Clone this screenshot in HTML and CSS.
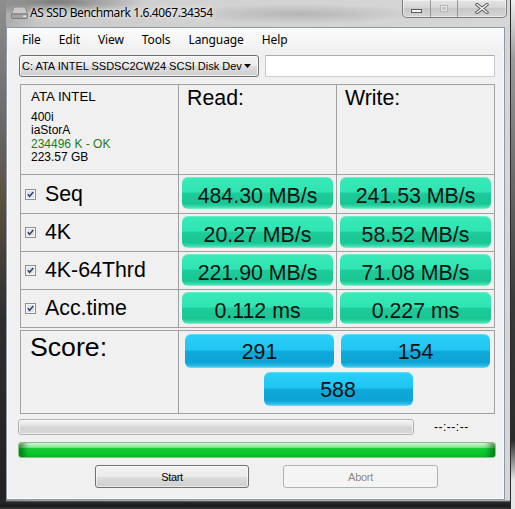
FILE: index.html
```html
<!DOCTYPE html>
<html>
<head>
<meta charset="utf-8">
<title>AS SSD Benchmark</title>
<link rel="stylesheet" href="styles.css">
</head>
<body>
<div class="window">
  <div class="titlebar">
    <svg class="app-icon" width="17" height="13" viewBox="0 0 17 13">
      <path d="M3 1 H14 L16.5 8 H0.5 Z" fill="#c9c9c9" stroke="#8c8c8c" stroke-width="1"/>
      <rect x="0.5" y="8" width="16" height="4.5" rx="1" fill="#a4a4a4" stroke="#7a7a7a" stroke-width="1"/>
      <rect x="12" y="9.5" width="3" height="1.5" fill="#e8e8e8"/>
    </svg>
    <span class="title">AS SSD Benchmark 1.6.4067.34354</span>
    <div class="caption">
      <span class="cb cb-min"><i class="min-glyph"></i></span>
      <span class="cb cb-max"><i class="max-glyph"></i></span>
      <span class="cb cb-close">
        <svg width="14" height="11" viewBox="0 0 14 11">
          <path d="M2 1.5 L12 9.5 M12 1.5 L2 9.5" stroke="#5a5a5a" stroke-width="3.4" stroke-linecap="round"/>
          <path d="M2 1.5 L12 9.5 M12 1.5 L2 9.5" stroke="#f4f4f4" stroke-width="1.6" stroke-linecap="round"/>
        </svg>
      </span>
    </div>
  </div>

  <div class="client">
    <nav class="menubar">
      <span>File</span><span>Edit</span><span>View</span><span>Tools</span><span>Language</span><span>Help</span>
    </nav>

    <div class="drive-row">
      <div class="select">
        <span class="select-text">C: ATA INTEL SSDSC2CW24 SCSI Disk Dev</span>
        <svg class="select-arrow" width="7" height="4" viewBox="0 0 7 4"><path d="M0 0 H7 L3.5 4 Z" fill="#000"/></svg>
      </div>
      <div class="textbox"></div>
    </div>

    <div class="results">
      <div class="cell info">
        <div class="info-title">ATA INTEL</div>
        <div class="info-line">400i</div>
        <div class="info-line">iaStorA</div>
        <div class="info-line ok">234496 K - OK</div>
        <div class="info-line">223.57 GB</div>
      </div>
      <div class="cell head">Read:</div>
      <div class="cell head">Write:</div>

      <div class="cell label">
        <svg class="chk" width="11" height="11" viewBox="0 0 11 11"><rect x="0.5" y="0.5" width="10" height="10" fill="#f6f6f6" stroke="#8e8f8f"/><rect x="2" y="2" width="7" height="7" fill="#dfe3e8"/><path d="M2.8 5.3 L4.6 7.3 L8.3 3" fill="none" stroke="#2e4270" stroke-width="1.5"/></svg>
        <span>Seq</span>
      </div>
      <div class="cell vcell"><div class="val green">484.30 MB/s</div></div>
      <div class="cell vcell"><div class="val green">241.53 MB/s</div></div>

      <div class="cell label">
        <svg class="chk" width="11" height="11" viewBox="0 0 11 11"><rect x="0.5" y="0.5" width="10" height="10" fill="#f6f6f6" stroke="#8e8f8f"/><rect x="2" y="2" width="7" height="7" fill="#dfe3e8"/><path d="M2.8 5.3 L4.6 7.3 L8.3 3" fill="none" stroke="#2e4270" stroke-width="1.5"/></svg>
        <span>4K</span>
      </div>
      <div class="cell vcell"><div class="val green">20.27 MB/s</div></div>
      <div class="cell vcell"><div class="val green">58.52 MB/s</div></div>

      <div class="cell label">
        <svg class="chk" width="11" height="11" viewBox="0 0 11 11"><rect x="0.5" y="0.5" width="10" height="10" fill="#f6f6f6" stroke="#8e8f8f"/><rect x="2" y="2" width="7" height="7" fill="#dfe3e8"/><path d="M2.8 5.3 L4.6 7.3 L8.3 3" fill="none" stroke="#2e4270" stroke-width="1.5"/></svg>
        <span>4K-64Thrd</span>
      </div>
      <div class="cell vcell"><div class="val green">221.90 MB/s</div></div>
      <div class="cell vcell"><div class="val green">71.08 MB/s</div></div>

      <div class="cell label">
        <svg class="chk" width="11" height="11" viewBox="0 0 11 11"><rect x="0.5" y="0.5" width="10" height="10" fill="#f6f6f6" stroke="#8e8f8f"/><rect x="2" y="2" width="7" height="7" fill="#dfe3e8"/><path d="M2.8 5.3 L4.6 7.3 L8.3 3" fill="none" stroke="#2e4270" stroke-width="1.5"/></svg>
        <span>Acc.time</span>
      </div>
      <div class="cell vcell"><div class="val green">0.112 ms</div></div>
      <div class="cell vcell"><div class="val green">0.227 ms</div></div>
    </div>

    <div class="score">
      <div class="cell score-label">Score:</div>
      <div class="cell score-vals">
        <div class="score-pair">
          <div class="val blue">291</div>
          <div class="val blue">154</div>
        </div>
        <div class="val blue total">588</div>
      </div>
    </div>

    <div class="progress-row">
      <div class="progress"></div>
      <span class="time">--:--:--</span>
    </div>

    <div class="greenbar"></div>

    <div class="buttons">
      <button class="btn">Start</button>
      <button class="btn" disabled>Abort</button>
    </div>
  </div>
</div>
</body>
</html>
```

FILE: styles.css
```css
* { box-sizing: border-box; }

html, body {
  margin: 0;
  padding: 0;
}

body {
  width: 515px;
  height: 509px;
  overflow: hidden;
  background: linear-gradient(to bottom, #f0f0f0 0, #9a9a9a 60px, #3a3a3a 300px, #2a2a2a 440px, #e6e6e6 480px);
  font-family: "Liberation Sans", Arial, sans-serif;
  color: #000;
}

.window {
  width: 511px;
  height: 509px;
  display: flex;
  flex-direction: column;
  border-right: 1px solid #2a2a2a;
  background:
    linear-gradient(to bottom, rgba(0,0,0,0) 0, rgba(0,0,0,0) 500px, #2c2c2c 502px, #1a1a1a 506px, #3a3a3a 509px),
    linear-gradient(to bottom, #8e8e8e 0, #6a6a6a 120px, #5a5040 200px, #2e2e2e 320px, #222 509px) left top / 6px 100% no-repeat,
    radial-gradient(ellipse 90px 14px at 55px 2px, rgba(70,70,70,0.6), rgba(70,70,70,0) 100%),
    radial-gradient(ellipse 120px 10px at 300px 14px, rgba(150,150,150,0.5), rgba(150,150,150,0) 100%),
    linear-gradient(to right, #a8a8a8 0, #c8c8c8 40px, #d2d2d2 200px, #d6d6d6 100%);
}

/* Title bar */
.titlebar {
  height: 27px;
  display: flex;
  align-items: flex-start;
  flex-shrink: 0;
}

.app-icon {
  margin: 6px 0 0 11px;
}

.title {
  margin: 5px 0 0 2px;
  font-family: "Noto Sans", "Open Sans", sans-serif;
  font-size: 12px;
  line-height: 16px;
  letter-spacing: -0.4px;
  color: #000;
  text-shadow: 0 0 6px #f2f2f2, 0 0 3px #f2f2f2;
}

.caption {
  margin-left: auto;
  margin-right: 3px;
  display: flex;
  height: 18px;
  border: 1px solid #7c7c7c;
  border-top: none;
  border-radius: 0 0 5px 5px;
  overflow: hidden;
  background: linear-gradient(to bottom, #e4e4e4 0, #d6d6d6 45%, #c8c8c8 50%, #d4d4d4 100%);
  box-shadow: inset 0 0 0 1px rgba(255,255,255,0.5);
}

.cb {
  display: flex;
  align-items: center;
  justify-content: center;
  height: 100%;
}

.cb-min { width: 28px; border-right: 1px solid #9a9a9a; }
.cb-max { width: 27px; border-right: 1px solid #9a9a9a; }
.cb-close { width: 48px; }

.min-glyph {
  display: block;
  width: 11px;
  height: 4px;
  margin-top: 5px;
  background: #f6f6f6;
  border: 1px solid #5c5c5c;
}

.max-glyph {
  display: block;
  width: 8px;
  height: 7px;
  border: 1px solid #b6b6b6;
  box-shadow: inset 0 0 0 1px #e6e6e6, inset 0 0 0 2px #c4c4c4;
}

/* Client area */
.client {
  margin-left: 6px;
  width: 499px;
  height: 473px;
  flex-shrink: 0;
  background: #f0f0f0;
  border: 1px solid #8d99a6;
  box-shadow: inset 0 0 0 1px #fbfbfb;
  display: flex;
  flex-direction: column;
}

.menubar {
  height: 22px;
  display: flex;
  align-items: center;
  padding-left: 6px;
  background: linear-gradient(to bottom, #fbfbfb, #f1f1f1);
  font-family: "Noto Sans", "Open Sans", sans-serif;
  font-size: 12px;
  letter-spacing: -0.1px;
  flex-shrink: 0;
}

.menubar span {
  padding: 0 9px;
}

.drive-row {
  margin-top: 5px;
  height: 22px;
  display: flex;
  gap: 6px;
  padding-left: 12px;
  flex-shrink: 0;
}

.select {
  width: 240px;
  height: 22px;
  display: flex;
  align-items: center;
  padding-left: 2px;
  border: 1px solid #707070;
  border-radius: 3px;
  background: linear-gradient(to bottom, #f2f2f2 0, #ebebeb 50%, #dddddd 51%, #cfcfcf 100%);
  box-shadow: inset 0 0 0 1px rgba(255,255,255,0.7);
}

.select-text {
  font-size: 11px;
  white-space: nowrap;
}

.select-arrow {
  margin-left: auto;
  margin-right: 7px;
}

.textbox {
  width: 230px;
  height: 22px;
  background: #fff;
  border: 1px solid #c6cbd1;
  border-top-color: #abadb3;
}

/* Results table */
.results {
  margin: 7px 0 0 13px;
  display: grid;
  grid-template-columns: 157px 157px 157px;
  grid-template-rows: 89px 38px 37px 37px 37px;
  gap: 1px;
  padding: 1px;
  width: 475px;
  background: #a0a0a0;
  flex-shrink: 0;
}

.cell {
  background: #f0f0f0;
}

.info {
  padding: 2px 0 0 10px;
}

.info-title {
  font-size: 13.33px;
  line-height: 20px;
}

.info-line {
  font-size: 12px;
  line-height: 13.4px;
}

.info-title + .info-line {
  margin-top: 4px;
}

.ok {
  color: #1d7a1d;
}

.head {
  padding: 1px 0 0 8px;
  font-size: 21.33px;
  line-height: 24px;
}

.label {
  display: flex;
  align-items: center;
  padding-left: 4px;
  font-size: 21.33px;
}

.chk {
  margin-right: 9px;
  flex-shrink: 0;
}

.vcell {
  padding: 2px 3px 0 3px;
}

.val {
  text-align: center;
  color: #111;
  white-space: nowrap;
}

.green {
  height: 32px;
  padding-top: 6px;
  line-height: 26px;
  font-size: 21.33px;
  border-radius: 6px;
  background: linear-gradient(to bottom, #38eab8 0, #2fe5b2 46%, #1dcb9a 52%, #19c794 84%, #3cdcae 94%, #86f2d0 100%);
  box-shadow: inset 0 1px 0 rgba(255,255,255,0.25);
}

/* Score */
.score {
  margin: 2px 0 0 13px;
  display: grid;
  grid-template-columns: 157px 315px;
  grid-template-rows: 82px;
  gap: 1px;
  padding: 1px;
  width: 475px;
  background: #a0a0a0;
  flex-shrink: 0;
}

.score-label {
  padding: 1px 0 0 9px;
  font-size: 26.67px;
  line-height: 30px;
}

.score-vals {
  display: flex;
  flex-direction: column;
  align-items: center;
  padding-top: 3px;
}

.score-pair {
  display: flex;
  gap: 7px;
  padding-left: 2px;
}

.blue {
  width: 149px;
  height: 34px;
  padding-top: 4px;
  line-height: 28px;
  font-size: 21.33px;
  border-radius: 6px;
  background: linear-gradient(to bottom, #2ad0f8 0, #20c6f2 46%, #0ea8da 52%, #0ea4d6 84%, #2ebcea 94%, #7adaf8 100%);
  box-shadow: inset 0 1px 0 rgba(255,255,255,0.25);
}

.total {
  margin-top: 4px;
  margin-left: 3px;
}

/* Progress */
.progress-row {
  margin: 5px 0 0 11px;
  height: 16px;
  display: flex;
  align-items: center;
  flex-shrink: 0;
}

.progress {
  width: 396px;
  height: 16px;
  border: 1px solid #b0b0b0;
  border-radius: 3px;
  background: linear-gradient(to bottom, #f6f6f6 0, #e2e2e2 40%, #d4d4d4 55%, #d8d8d8 100%);
  box-shadow: inset 0 0 0 1px rgba(255,255,255,0.6);
}

.time {
  margin-left: 20px;
  font-size: 12px;
  letter-spacing: 0.5px;
}

.greenbar {
  margin: 7px 0 0 11px;
  width: 478px;
  height: 16px;
  flex-shrink: 0;
  border: 1px solid #86c486;
  border-radius: 3px;
  background: linear-gradient(to bottom, #e4fae4 0, #a8eeb0 18%, #78e488 32%, #12cc34 40%, #0ac52c 85%, #12b82e 100%);
  box-shadow: inset 10px 0 6px -5px rgba(0,70,0,0.55), inset -10px 0 6px -5px rgba(0,70,0,0.55);
}

/* Buttons */
.buttons {
  margin: 7px 0 0 88px;
  display: flex;
  gap: 34px;
  flex-shrink: 0;
}

.btn {
  width: 154px;
  height: 23px;
  padding: 0;
  border: 1px solid #707070;
  border-radius: 3px;
  background: linear-gradient(to bottom, #f2f2f2 0, #ebebeb 50%, #dddddd 51%, #cfcfcf 100%);
  box-shadow: inset 0 0 0 1px rgba(255,255,255,0.6);
  font-family: "Liberation Sans", Arial, sans-serif;
  font-size: 11px;
  letter-spacing: -0.3px;
  color: #000;
}

.btn:disabled {
  width: 155px;
  border-color: #adb2b5;
  background: #f4f4f4;
  box-shadow: none;
  color: #8a8a8a;
}
```
